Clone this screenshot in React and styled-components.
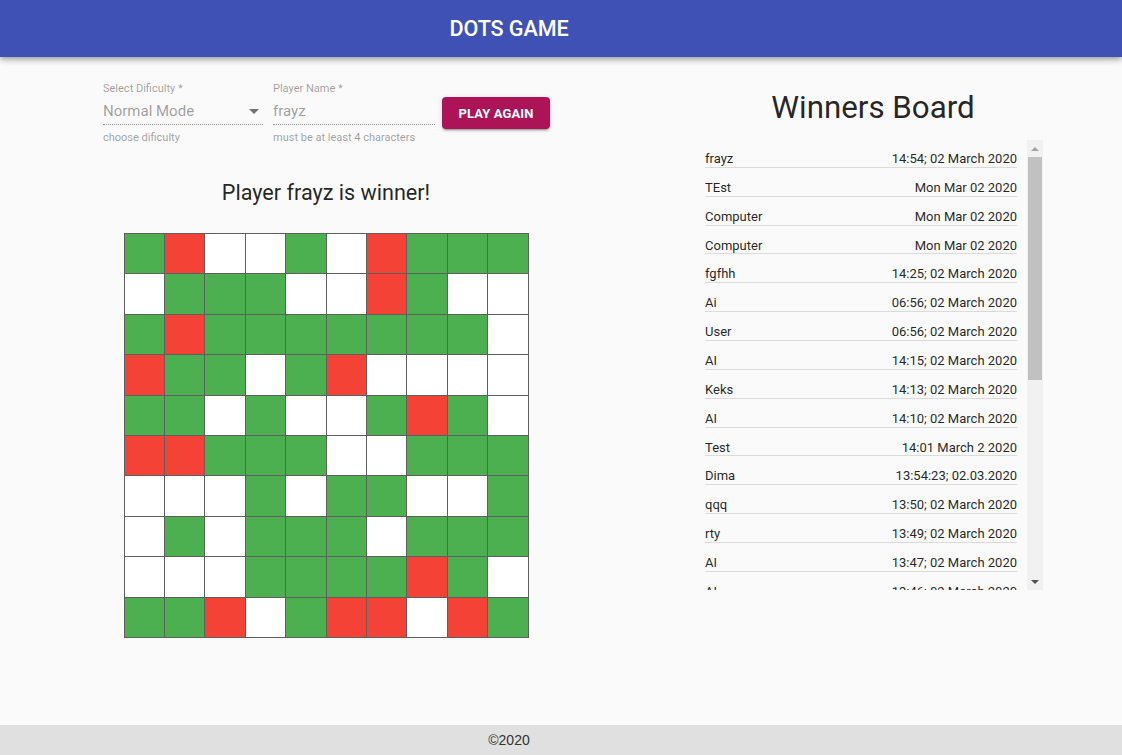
import React from "react";
import styled, { createGlobalStyle } from "styled-components";

const GlobalStyle = createGlobalStyle`
  html, body { margin: 0; padding: 0; }
  body {
    background: #fafafa;
    font-family: Roboto, "Liberation Sans", sans-serif;
    color: rgba(0, 0, 0, 0.87);
  }
  * { box-sizing: border-box; }
`;

const Page = styled.div`
  min-height: 100vh;
  display: flex;
  flex-direction: column;
`;

const Header = styled.header`
  height: 57px;
  background: #3f51b5;
  color: #fff;
  display: flex;
  align-items: center;
  justify-content: center;
  padding-right: 104px;
  box-shadow: 0 2px 4px -1px rgba(0,0,0,0.2), 0 4px 5px 0 rgba(0,0,0,0.14), 0 1px 10px 0 rgba(0,0,0,0.12);
  position: relative;
  z-index: 1;
`;

const HeaderTitle = styled.h1`
  margin: 0;
  font-size: 21.6px;
  font-weight: 500;
  letter-spacing: -0.1px;
`;

const Main = styled.main`
  flex: 1;
  display: grid;
  grid-template-columns: 652px 442px;
`;

const LeftColumn = styled.section`
  display: flex;
  flex-direction: column;
  align-items: center;
  padding-top: 23px;
`;

const FormRow = styled.div`
  display: flex;
  align-items: flex-start;
  margin-left: 1px;
`;

const Field = styled.div`
  display: flex;
  flex-direction: column;
  width: ${p => p.$width}px;
  margin-right: ${p => p.$gap}px;
`;

const Label = styled.label`
  padding-top: 2px;
  font-size: 11px;
  line-height: 14px;
  color: rgba(0, 0, 0, 0.38);
`;

const InputBox = styled.div`
  display: flex;
  align-items: center;
  justify-content: space-between;
  padding: 6px 0 4px;
  font-size: 15px;
  line-height: 18px;
  color: rgba(0, 0, 0, 0.38);
  border-bottom: 1px dotted rgba(0, 0, 0, 0.42);
`;

const Arrow = styled.span`
  width: 0;
  height: 0;
  margin-right: 4px;
  border-left: 5px solid transparent;
  border-right: 5px solid transparent;
  border-top: 5px solid rgba(0, 0, 0, 0.54);
`;

const Helper = styled.p`
  margin: 6px 0 0;
  font-size: 11px;
  line-height: 14px;
  color: rgba(0, 0, 0, 0.38);
`;

const Button = styled.button`
  margin-top: 17px;
  width: 108px;
  height: 32px;
  border: none;
  border-radius: 4px;
  background: #ad1457;
  color: #fff;
  font-family: Roboto, "Liberation Sans", sans-serif;
  font-size: 13px;
  font-weight: 700;
  letter-spacing: 0.1px;
  text-transform: uppercase;
  box-shadow: 0 3px 1px -2px rgba(0,0,0,0.2), 0 2px 2px 0 rgba(0,0,0,0.14), 0 1px 5px 0 rgba(0,0,0,0.12);
`;

const Status = styled.h2`
  margin: 33px 0 0;
  font-size: 21.6px;
  line-height: 30px;
  font-weight: 400;
  color: rgba(0, 0, 0, 0.87);
`;

const Board = styled.div`
  margin-top: 25px;
  width: 405px;
  display: grid;
  grid-template-columns: repeat(10, 1fr);
  gap: 1px;
  padding: 1px;
  background: #5f5f5f;
`;

const Cell = styled.div`
  height: 39.4px;
  background: ${p => (p.$c === "G" ? "#4caf50" : p.$c === "R" ? "#f44336" : "#ffffff")};
`;

const RightColumn = styled.section`
  display: flex;
  flex-direction: column;
  padding-top: 30px;
`;

const BoardTitle = styled.h2`
  margin: 0;
  text-align: center;
  font-size: 31.3px;
  line-height: 41px;
  font-weight: 400;
  color: rgba(0, 0, 0, 0.87);
`;

const Panel = styled.div`
  margin: 11px 0 0 45px;
  width: 346px;
  height: 451px;
  display: flex;
`;

const List = styled.ul`
  flex: 1;
  margin: 0;
  padding: 0;
  list-style: none;
  overflow: hidden;
`;

const Item = styled.li`
  margin: 0 10px 0 8px;
  padding: 12px 0 0;
  display: flex;
  justify-content: space-between;
  font-size: 13px;
  line-height: 15.86px;
  color: rgba(0, 0, 0, 0.87);
  border-bottom: 1px solid #dcdcdc;
`;

const Scrollbar = styled.div`
  width: 16px;
  background: #f1f1f1;
  display: flex;
  flex-direction: column;
  align-items: stretch;
  margin-top: 1px;
`;

const ScrollButton = styled.div`
  height: 17px;
  display: flex;
  align-items: center;
  justify-content: center;
  flex: none;
`;

const Tri = styled.span`
  width: 0;
  height: 0;
  border-left: 4px solid transparent;
  border-right: 4px solid transparent;
  ${p => (p.$up ? "border-bottom: 4px solid #a3a3a3;" : "border-top: 4px solid #505050;")}
`;

const Track = styled.div`
  flex: 1;
  display: flex;
  flex-direction: column;
`;

const Thumb = styled.div`
  height: 223px;
  margin: 0 1px;
  background: #c1c1c1;
`;

const Footer = styled.footer`
  height: 30px;
  background: #e0e0e0;
  display: flex;
  align-items: center;
  justify-content: center;
  padding-right: 104px;
  font-family: "Liberation Sans", Arial, sans-serif;
  font-size: 14px;
  color: #333;
`;

const grid = [
  "GRWWGWRGGG",
  "WGGGWWRGWW",
  "GRGGGGGGGW",
  "RGGWGRWWWW",
  "GGWGWWGRGW",
  "RRGGGWWGGG",
  "WWWGWGGWWG",
  "WGWGGGWGGG",
  "WWWGGGGRGW",
  "GGRWGRRWRG",
];

const winners = [
  ["frayz", "14:54; 02 March 2020"],
  ["TEst", "Mon Mar 02 2020"],
  ["Computer", "Mon Mar 02 2020"],
  ["Computer", "Mon Mar 02 2020"],
  ["fgfhh", "14:25; 02 March 2020"],
  ["Ai", "06:56; 02 March 2020"],
  ["User", "06:56; 02 March 2020"],
  ["AI", "14:15; 02 March 2020"],
  ["Keks", "14:13; 02 March 2020"],
  ["AI", "14:10; 02 March 2020"],
  ["Test", "14:01 March 2 2020"],
  ["Dima", "13:54:23; 02.03.2020"],
  ["qqq", "13:50; 02 March 2020"],
  ["rty", "13:49; 02 March 2020"],
  ["AI", "13:47; 02 March 2020"],
  ["AI", "13:46; 02 March 2020"],
  ["AI", "13:44; 02 March 2020"],
];

export default function App() {
  return (
    <Page>
      <GlobalStyle />
      <Header>
        <HeaderTitle>DOTS GAME</HeaderTitle>
      </Header>
      <Main>
        <LeftColumn>
          <FormRow>
            <Field $width={160} $gap={10}>
              <Label>Select Dificulty *</Label>
              <InputBox>
                <span>Normal Mode</span>
                <Arrow />
              </InputBox>
              <Helper>choose dificulty</Helper>
            </Field>
            <Field $width={162} $gap={7}>
              <Label>Player Name *</Label>
              <InputBox>
                <span>frayz</span>
              </InputBox>
              <Helper>must be at least 4 characters</Helper>
            </Field>
            <Button>Play again</Button>
          </FormRow>
          <Status>Player frayz is winner!</Status>
          <Board>
            {grid.flatMap((row, r) =>
              row.split("").map((c, i) => <Cell key={`${r}-${i}`} $c={c} />)
            )}
          </Board>
        </LeftColumn>
        <RightColumn>
          <BoardTitle>Winners Board</BoardTitle>
          <Panel>
            <List>
              {winners.map(([name, date], i) => (
                <Item key={i}>
                  <span>{name}</span>
                  <span>{date}</span>
                </Item>
              ))}
            </List>
            <Scrollbar>
              <ScrollButton><Tri $up /></ScrollButton>
              <Track>
                <Thumb />
              </Track>
              <ScrollButton><Tri /></ScrollButton>
            </Scrollbar>
          </Panel>
        </RightColumn>
      </Main>
      <Footer>©2020</Footer>
    </Page>
  );
}
